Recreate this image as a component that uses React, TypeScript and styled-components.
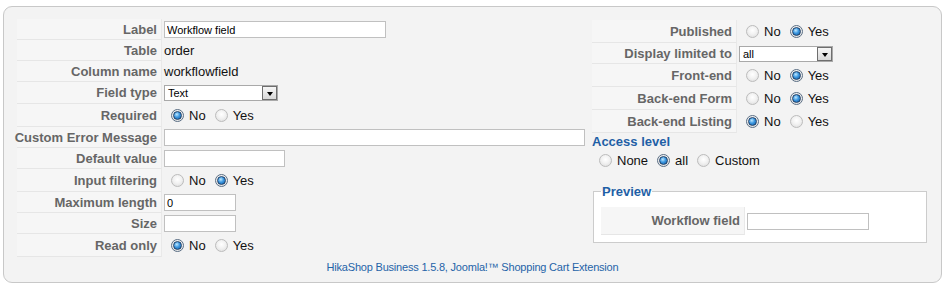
import React from "react";
import styled, { createGlobalStyle } from "styled-components";

const GlobalStyle = createGlobalStyle`
  html, body { margin: 0; padding: 0; background: #ffffff; }
  body { font-family: "Liberation Sans", Arial, sans-serif; }
  * { box-sizing: border-box; }
`;

const Page = styled.div`
  padding: 6px 0 0 3px;
`;

const Panel = styled.div`
  width: 939px;
  border: 1px solid #c8c8c8;
  border-radius: 9px;
  background: #f3f3f3;
  padding: 0 0 8px 0;
  display: flex;
  flex-direction: column;
`;

const Columns = styled.div`
  display: flex;
  padding: 12px 0 0 13px;
`;

const LeftCol = styled.div`
  width: 575px;
  display: flex;
  flex-direction: column;
`;

const RightCol = styled.div`
  width: 335px;
  padding-top: 1px;
  display: flex;
  flex-direction: column;
`;

const Row = styled.div<{ $h: number }>`
  display: flex;
  height: ${(p) => p.$h}px;
`;

const KeyCell = styled.div<{ $w?: number }>`
  width: ${(p) => p.$w ?? 145}px;
  flex: none;
  background: #f6f6f6;
  border-right: 1px solid #e9e9e9;
  border-bottom: 1px solid #e6e6e6;
  display: flex;
  align-items: center;
  justify-content: flex-end;
  padding-right: 4px;
  font-size: 13px;
  font-weight: bold;
  color: #666666;
  white-space: nowrap;
`;

const ValueCell = styled.div`
  flex: 1;
  display: flex;
  align-items: center;
  padding-left: 2px;
  font-size: 13px;
  color: #111111;
  white-space: nowrap;
`;

const TextInput = styled.input<{ $w: number }>`
  width: ${(p) => p.$w}px;
  height: 17px;
  margin: 0;
  padding: 0 2px;
  border: 1px solid #c0c0c0;
  background: #ffffff;
  font-family: "Liberation Sans", Arial, sans-serif;
  font-size: 11px;
  color: #000000;
  outline: none;
`;

const SelectBox = styled.div<{ $w: number }>`
  width: ${(p) => p.$w}px;
  height: 16px;
  border: 1px solid #a9a9a9;
  background: #ffffff;
  display: flex;
  align-items: center;
  justify-content: space-between;
  padding-left: 3px;
  font-size: 11px;
  color: #000000;
`;

const SelectButton = styled.span`
  width: 15px;
  height: 14px;
  border: 1px solid #6e6e6e;
  background: linear-gradient(#f6f6f6, #d8d8d8);
  display: flex;
  align-items: center;
  justify-content: center;
  &::after {
    content: "";
    border-left: 3.5px solid transparent;
    border-right: 3.5px solid transparent;
    border-top: 4px solid #000000;
    margin-top: 2px;
  }
`;

const RadioGroup = styled.div<{ $indent?: number }>`
  display: flex;
  align-items: center;
  padding-left: ${(p) => p.$indent ?? 0}px;
  font-size: 13px;
  color: #111111;
`;

const Radio = styled.span<{ $on?: boolean }>`
  width: 13px;
  height: 13px;
  flex: none;
  border-radius: 50%;
  margin: 0 5px 0 7px;
  border: 1px solid ${(p) => (p.$on ? "#5a6e84" : "#bcbcbc")};
  background: radial-gradient(circle at 50% 40%, #ffffff 0%, #f2f2f2 45%, #dadada 100%);
  display: flex;
  align-items: center;
  justify-content: center;
  &::after {
    content: "";
    display: ${(p) => (p.$on ? "block" : "none")};
    width: 7px;
    height: 7px;
    border-radius: 50%;
    border: 1px solid #1f3f66;
    background: radial-gradient(circle at 40% 35%, #bfe8ff 0%, #3b97e0 45%, #12589e 100%);
  }
`;

const RadioText = styled.span`
  margin-right: 2px;
`;

const AccessHeading = styled.div`
  font-size: 13px;
  font-weight: bold;
  color: #1f5fa6;
  line-height: 16px;
  margin-top: 1px;
`;

const AccessRow = styled.div`
  height: 20px;
  display: flex;
  align-items: center;
`;

const Preview = styled.fieldset`
  margin: 14px 0 0 1px;
  width: 334px;
  padding: 8px 7px 7px 7px;
  border: 1px solid #cccccc;
  background: #ffffff;
  min-width: 0;
`;

const PreviewLegend = styled.legend`
  font-size: 13px;
  font-weight: bold;
  color: #1f5fa6;
  padding: 0 1px;
  line-height: 15px;
`;

const Footer = styled.div`
  margin-top: 4px;
  text-align: center;
  font-size: 11px;
  line-height: 13px;
  letter-spacing: -0.2px;
  color: #2563a8;
`;

type Opt = { label: string; on?: boolean };

const Radios: React.FC<{ options: Opt[]; indent?: number }> = ({ options, indent }) => (
  <RadioGroup $indent={indent}>
    {options.map((o) => (
      <React.Fragment key={o.label}>
        <Radio $on={o.on} />
        <RadioText>{o.label}</RadioText>
      </React.Fragment>
    ))}
  </RadioGroup>
);

const noYes = (yes: boolean): Opt[] => [
  { label: "No", on: !yes },
  { label: "Yes", on: yes },
];

const Select: React.FC<{ w: number; value: string }> = ({ w, value }) => (
  <SelectBox $w={w}>
    <span>{value}</span>
    <SelectButton />
  </SelectBox>
);

export default function App() {
  return (
    <>
      <GlobalStyle />
      <Page>
        <Panel>
          <Columns>
            <LeftCol>
              <Row $h={21}>
                <KeyCell>Label</KeyCell>
                <ValueCell>
                  <TextInput $w={222} defaultValue="Workflow field" />
                </ValueCell>
              </Row>
              <Row $h={21}>
                <KeyCell>Table</KeyCell>
                <ValueCell>order</ValueCell>
              </Row>
              <Row $h={21}>
                <KeyCell>Column name</KeyCell>
                <ValueCell>workflowfield</ValueCell>
              </Row>
              <Row $h={22}>
                <KeyCell>Field type</KeyCell>
                <ValueCell>
                  <Select w={114} value="Text" />
                </ValueCell>
              </Row>
              <Row $h={23}>
                <KeyCell>Required</KeyCell>
                <ValueCell>
                  <Radios options={noYes(false)} />
                </ValueCell>
              </Row>
              <Row $h={21}>
                <KeyCell>Custom Error Message</KeyCell>
                <ValueCell>
                  <TextInput $w={421} defaultValue="" />
                </ValueCell>
              </Row>
              <Row $h={21}>
                <KeyCell>Default value</KeyCell>
                <ValueCell>
                  <TextInput $w={121} defaultValue="" />
                </ValueCell>
              </Row>
              <Row $h={23}>
                <KeyCell>Input filtering</KeyCell>
                <ValueCell>
                  <Radios options={noYes(true)} />
                </ValueCell>
              </Row>
              <Row $h={21}>
                <KeyCell>Maximum length</KeyCell>
                <ValueCell>
                  <TextInput $w={72} defaultValue="0" />
                </ValueCell>
              </Row>
              <Row $h={21}>
                <KeyCell>Size</KeyCell>
                <ValueCell>
                  <TextInput $w={72} defaultValue="" />
                </ValueCell>
              </Row>
              <Row $h={23}>
                <KeyCell>Read only</KeyCell>
                <ValueCell>
                  <Radios options={noYes(false)} />
                </ValueCell>
              </Row>
            </LeftCol>
            <RightCol>
              <Row $h={23}>
                <KeyCell>Published</KeyCell>
                <ValueCell>
                  <Radios options={noYes(true)} />
                </ValueCell>
              </Row>
              <Row $h={21}>
                <KeyCell>Display limited to</KeyCell>
                <ValueCell>
                  <Select w={94} value="all" />
                </ValueCell>
              </Row>
              <Row $h={23}>
                <KeyCell>Front-end</KeyCell>
                <ValueCell>
                  <Radios options={noYes(true)} />
                </ValueCell>
              </Row>
              <Row $h={23}>
                <KeyCell>Back-end Form</KeyCell>
                <ValueCell>
                  <Radios options={noYes(true)} />
                </ValueCell>
              </Row>
              <Row $h={23}>
                <KeyCell>Back-end Listing</KeyCell>
                <ValueCell>
                  <Radios options={noYes(false)} />
                </ValueCell>
              </Row>
              <AccessHeading>Access level</AccessHeading>
              <AccessRow>
                <Radios
                  indent={-2}
                  options={[
                    { label: "None" },
                    { label: "all", on: true },
                    { label: "Custom" },
                  ]}
                />
              </AccessRow>
              <Preview>
                <PreviewLegend>Preview</PreviewLegend>
                <Row $h={28}>
                  <KeyCell $w={144}>Workflow field</KeyCell>
                  <ValueCell>
                    <TextInput $w={122} defaultValue="" />
                  </ValueCell>
                </Row>
              </Preview>
            </RightCol>
          </Columns>
          <Footer>HikaShop Business 1.5.8, Joomla!™ Shopping Cart Extension</Footer>
        </Panel>
      </Page>
    </>
  );
}
